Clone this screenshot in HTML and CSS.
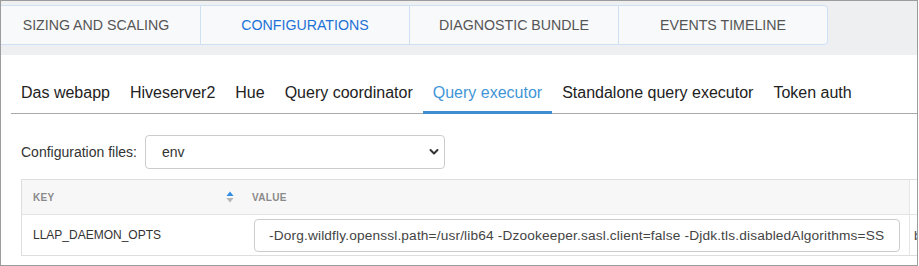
FILE: index.html
```html
<!DOCTYPE html>
<html>
<head>
    <meta charset="UTF-8">
    <title>Configurations</title>
    <link rel="stylesheet" href="styles.css">
</head>
<body>
    <div class="frame">
        <div class="top-bar">
            <div class="top-tabs">
                <div class="top-tab">Sizing and Scaling</div>
                <div class="top-tab active">Configurations</div>
                <div class="top-tab">Diagnostic Bundle</div>
                <div class="top-tab last">Events Timeline</div>
            </div>
        </div>

        <div class="sub-tabs">
            <div class="sub-tab">Das webapp</div>
            <div class="sub-tab">Hiveserver2</div>
            <div class="sub-tab">Hue</div>
            <div class="sub-tab">Query coordinator</div>
            <div class="sub-tab active">Query executor</div>
            <div class="sub-tab">Standalone query executor</div>
            <div class="sub-tab">Token auth</div>
        </div>

        <div class="config-row">
            <span class="config-label">Configuration files:</span>
            <div class="select">
                <span>env</span>
                <svg width="12" height="8" viewBox="0 0 12 8">
                    <path d="M2.5 2 L6 5.5 L9.5 2" fill="none" stroke="#333" stroke-width="2" stroke-linecap="round" stroke-linejoin="round"/>
                </svg>
            </div>
        </div>

        <div class="table">
            <div class="table-head">
                <div class="cell key-cell head-cell">
                    <span>Key</span>
                    <!-- sort arrows -->
                    <svg class="sort-icon" width="8" height="12" viewBox="0 0 8 12">
                        <path d="M4 0.5 L7.5 5 L0.5 5 Z" fill="#2f8de4"/>
                        <path d="M0.5 7 L7.5 7 L4 11.5 Z" fill="#b5b5b5"/>
                    </svg>
                </div>
                <div class="cell value-cell head-cell">Value</div>
                <div class="cell extra-cell head-extra"></div>
            </div>
            <div class="table-row">
                <div class="cell key-cell">LLAP_DAEMON_OPTS</div>
                <div class="cell value-cell">
                    <input class="value-input" type="text" value="-Dorg.wildfly.openssl.path=/usr/lib64 -Dzookeeper.sasl.client=false -Djdk.tls.disabledAlgorithms=SSLv3,GCM">
                </div>
                <div class="cell extra-cell">b</div>
            </div>
        </div>
    </div>
</body>
</html>
```

FILE: styles.css
```css
* {
    box-sizing: border-box;
}

html, body {
    margin: 0;
    padding: 0;
    background: #fff;
    font-family: "Liberation Sans", Arial, sans-serif;
}

.frame {
    width: 918px;
    height: 266px;
    border: 1px solid #9c9c9c;
    overflow: hidden;
    background: #fff;
}

/* top tab strip */
.top-bar {
    background: #eeeff1;
    padding: 4px 0 10px 0;
}

.top-tabs {
    display: flex;
    margin-left: -10px;
}

.top-tab {
    width: 209px;
    height: 40px;
    display: flex;
    align-items: center;
    justify-content: center;
    background: #f8f9fb;
    border-top: 1px solid #cfe0f5;
    border-bottom: 1px solid #cfe0f5;
    border-left: 1px solid #cfe0f5;
    color: #555;
    font-size: 14.2px;
    text-transform: uppercase;
}

.top-tab.active {
    color: #1c72d6;
}

.top-tab.last {
    width: 210px;
    border-right: 1px solid #cfe0f5;
    border-radius: 0 4px 4px 0;
}

/* service tabs */
.sub-tabs {
    display: flex;
    margin: 20px 0 0 10px;
    border-bottom: 1px solid #a9a9a9;
}

.sub-tab {
    padding: 0 10px;
    height: 39px;
    line-height: 36px;
    font-size: 16px;
    color: #222;
    border-bottom: 3px solid transparent;
    margin-bottom: -1px;
}

.sub-tab.active {
    color: #3f96d6;
    border-bottom-color: #3f8fd0;
}

/* config file selector */
.config-row {
    display: flex;
    align-items: center;
    margin: 21px 0 0 20px;
}

.config-label {
    font-size: 14px;
    color: #333;
    margin-right: 8px;
}

.select {
    width: 300px;
    height: 34px;
    border: 1px solid #ccc;
    border-radius: 4px;
    display: flex;
    align-items: center;
    justify-content: space-between;
    padding: 0 4px 0 16px;
    font-size: 14px;
    color: #333;
}

/* table */
.table {
    margin: 10px 0 0 20px;
    width: 1000px;
    border: 1px solid #dedede;
}

.table-head, .table-row {
    display: flex;
}

.table-head {
    background: #f7f7f7;
    height: 35px;
    border-bottom: 1px solid #e4e4e4;
}

.table-row {
    height: 40px;
}

.cell {
    display: flex;
    align-items: center;
}

.key-cell {
    width: 220px;
    padding: 0 8px 0 11px;
    font-size: 12px;
    color: #333;
}

.head-cell {
    font-size: 10px;
    font-weight: bold;
    color: #8a8a8a;
    text-transform: uppercase;
    letter-spacing: 0.3px;
}

.key-cell.head-cell {
    justify-content: space-between;
}

.value-cell {
    width: 667px;
    padding: 0 9px 0 12px;
}

.value-cell.head-cell {
    padding-left: 10px;
}

.extra-cell {
    border-left: 1px solid #e6e6e6;
    padding-left: 4px;
    font-size: 13px;
    color: #444;
    background: #fff;
    flex: 1;
}

.value-input {
    width: 100%;
    height: 33px;
    border: 1px solid #ccc;
    border-radius: 4px;
    padding: 0 14px;
    font-family: "Liberation Sans", Arial, sans-serif;
    font-size: 13.7px;
    letter-spacing: 0.15px;
    color: #444;
    outline: none;
}
```
